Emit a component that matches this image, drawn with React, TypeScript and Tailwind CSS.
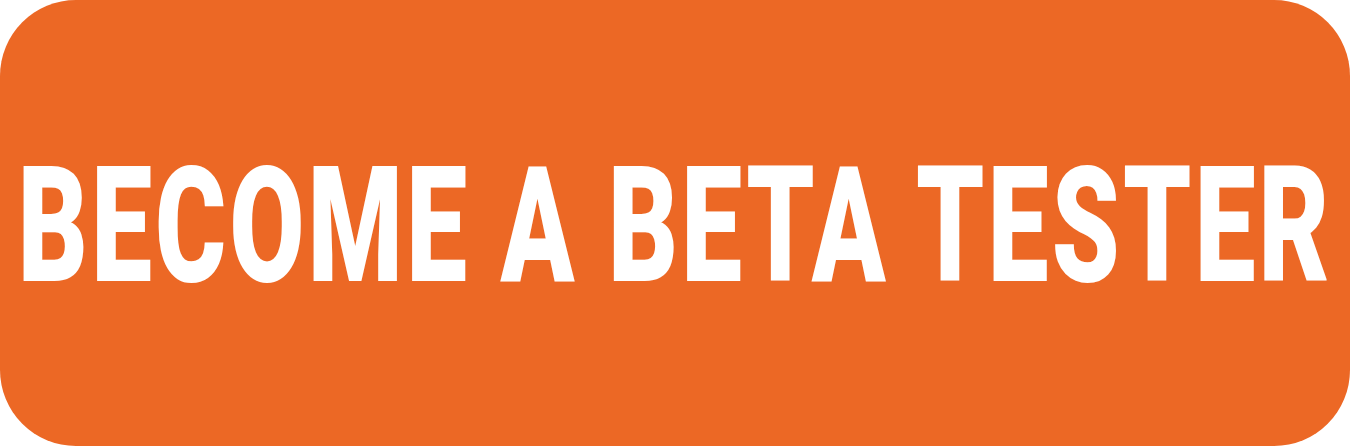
export default function App() {
  return (
    <div className="w-[1350px] h-[446px] bg-white">
      <button className="w-full h-full rounded-[76px] bg-[#ec6825] flex items-center justify-center overflow-hidden">
        <span className="block whitespace-nowrap text-white font-black text-[162px] leading-none tracking-[0.03em] [font-family:Roboto,'Liberation_Sans',sans-serif] scale-x-[0.67] pt-[6px]">
          BECOME A BETA TESTER
        </span>
      </button>
    </div>
  );
}
